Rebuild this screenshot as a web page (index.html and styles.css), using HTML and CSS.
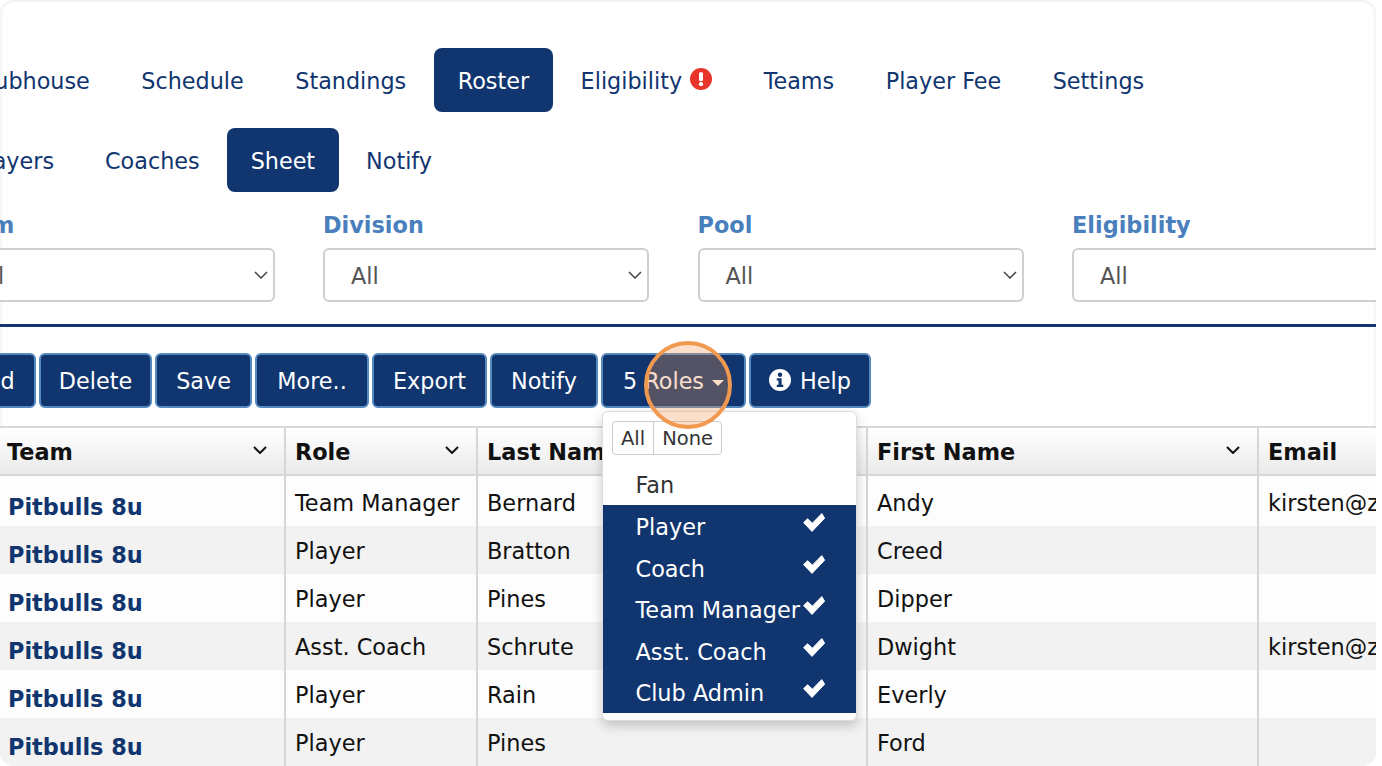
FILE: index.html
```html
<!DOCTYPE html>
<html lang="en">
<head>
<meta charset="utf-8">
<title>Roster</title>
<link rel="stylesheet" href="styles.css">
</head>
<body>
<div class="frame">
  <main class="card">
    <nav class="tabs tabs-main">
      <a class="tab">Clubhouse</a>
      <a class="tab">Schedule</a>
      <a class="tab">Standings</a>
      <a class="tab active">Roster</a>
      <a class="tab">Eligibility
        <svg class="alert" viewBox="0 0 22 22" aria-hidden="true"><circle cx="11" cy="11" r="11" fill="#e8352b"/><rect x="9" y="4.2" width="4" height="9" rx="1.4" fill="#fff"/><circle cx="11" cy="16.2" r="2.1" fill="#fff"/></svg>
      </a>
      <a class="tab">Teams</a>
      <a class="tab">Player Fee</a>
      <a class="tab">Settings</a>
    </nav>
    <nav class="tabs tabs-sub">
      <a class="tab">Players</a>
      <a class="tab">Coaches</a>
      <a class="tab active">Sheet</a>
      <a class="tab">Notify</a>
    </nav>
    <section class="filters">
      <div class="filter"><div class="filter-label">Team</div><div class="select">All<svg class="chev" viewBox="0 0 14 8"><path d="M1 1l6 6 6-6"/></svg></div></div>
      <div class="filter"><div class="filter-label">Division</div><div class="select">All<svg class="chev" viewBox="0 0 14 8"><path d="M1 1l6 6 6-6"/></svg></div></div>
      <div class="filter"><div class="filter-label">Pool</div><div class="select">All<svg class="chev" viewBox="0 0 14 8"><path d="M1 1l6 6 6-6"/></svg></div></div>
      <div class="filter"><div class="filter-label">Eligibility</div><div class="select">All<svg class="chev" viewBox="0 0 14 8"><path d="M1 1l6 6 6-6"/></svg></div></div>
    </section>
    <hr class="rule">
    <div class="toolbar">
      <button class="btn btn-add">Add</button>
      <button class="btn btn-delete">Delete</button>
      <button class="btn btn-save">Save</button>
      <button class="btn btn-more">More..</button>
      <button class="btn btn-export">Export</button>
      <button class="btn btn-notify">Notify</button>
      <button class="btn btn-roles">5 Roles<span class="caret"></span></button>
      <button class="btn btn-help"><svg class="info" viewBox="0 0 22 22" aria-hidden="true"><circle cx="11" cy="11" r="11" fill="#fff"/><circle cx="11" cy="5.8" r="2.2" fill="#10356f"/><path d="M7.8 9.2h4.8v6.6h1.7v2.2H7.8v-2.2h1.7v-4.4H7.8z" fill="#10356f"/></svg>Help</button>
    </div>
    <div class="grid">
      <div class="row head">
        <div class="cell">Team<svg class="sort" viewBox="0 0 14 8"><path d="M1 1l6 6 6-6"/></svg></div>
        <div class="cell">Role<svg class="sort" viewBox="0 0 14 8"><path d="M1 1l6 6 6-6"/></svg></div>
        <div class="cell">Last Name</div>
        <div class="cell">First Name<svg class="sort" viewBox="0 0 14 8"><path d="M1 1l6 6 6-6"/></svg></div>
        <div class="cell">Email</div>
      </div>
      <div class="row first"><div class="cell team">Pitbulls 8u</div><div class="cell">Team Manager</div><div class="cell">Bernard</div><div class="cell">Andy</div><div class="cell">kirsten@zulu.com</div></div>
      <div class="row alt"><div class="cell team">Pitbulls 8u</div><div class="cell">Player</div><div class="cell">Bratton</div><div class="cell">Creed</div><div class="cell"></div></div>
      <div class="row"><div class="cell team">Pitbulls 8u</div><div class="cell">Player</div><div class="cell">Pines</div><div class="cell">Dipper</div><div class="cell"></div></div>
      <div class="row alt"><div class="cell team">Pitbulls 8u</div><div class="cell">Asst. Coach</div><div class="cell">Schrute</div><div class="cell">Dwight</div><div class="cell">kirsten@zulu.com</div></div>
      <div class="row"><div class="cell team">Pitbulls 8u</div><div class="cell">Player</div><div class="cell">Rain</div><div class="cell">Everly</div><div class="cell"></div></div>
      <div class="row alt"><div class="cell team">Pitbulls 8u</div><div class="cell">Player</div><div class="cell">Pines</div><div class="cell">Ford</div><div class="cell"></div></div>
    </div>
    <div class="menu">
      <div class="menu-actions"><span class="mini">All</span><span class="mini">None</span></div>
      <ul class="menu-list">
        <li class="opt">Fan</li>
        <li class="opt on">Player<svg class="check" viewBox="0 0 22 19"><polygon points="0.6,9.6 4.6,5.8 9.4,10.2 18.8,0.6 21.6,5.2 9,18.4"/></svg></li>
        <li class="opt on">Coach<svg class="check" viewBox="0 0 22 19"><polygon points="0.6,9.6 4.6,5.8 9.4,10.2 18.8,0.6 21.6,5.2 9,18.4"/></svg></li>
        <li class="opt on">Team Manager<svg class="check" viewBox="0 0 22 19"><polygon points="0.6,9.6 4.6,5.8 9.4,10.2 18.8,0.6 21.6,5.2 9,18.4"/></svg></li>
        <li class="opt on">Asst. Coach<svg class="check" viewBox="0 0 22 19"><polygon points="0.6,9.6 4.6,5.8 9.4,10.2 18.8,0.6 21.6,5.2 9,18.4"/></svg></li>
        <li class="opt on">Club Admin<svg class="check" viewBox="0 0 22 19"><polygon points="0.6,9.6 4.6,5.8 9.4,10.2 18.8,0.6 21.6,5.2 9,18.4"/></svg></li>
      </ul>
    </div>
    <div class="spotlight"></div>
  </main>
</div>
</body>
</html>
```
FILE: styles.css
```css
* { box-sizing: border-box; }
html, body { margin: 0; height: 100%; background: #fff; overflow: hidden; }
body { font-family: "DejaVu Sans", Verdana, sans-serif; color: #111; }
.frame { width: 1376px; height: 766px; }
.card {
  position: relative;
  width: 1376px;
  height: 766px;
  overflow: hidden;
  background: #fff;
  border-radius: 14px;
  box-shadow: inset 0 2px 3px rgba(0,0,0,.05), inset 2px 0 3px rgba(0,0,0,.03), inset -2px 0 3px rgba(0,0,0,.03);
  padding-top: 48px;
}
.tabs { display: flex; font-size: 22.3px; white-space: nowrap; height: 64px; gap: 3.5px; margin-left: -51.5px; }
.tabs-sub { margin-top: 16px; gap: 3px; margin-left: -51px; }
.tab {
  display: flex;
  align-items: center;
  padding: 1px 24px 0;
  color: #10356f;
  border-radius: 8px;
}
.tab.active { background: #10356f; color: #fff; }
.alert { width: 22px; height: 22px; margin-left: 8px; margin-top: -4px; }
.filters { display: flex; gap: 48.5px; margin: 18px 0 0 -51.5px; }
.filter { flex: 0 0 326px; }
.filter-label { font-size: 22.4px; font-weight: 700; color: #4a7fbd; height: 38px; line-height: 30px; }
.select {
  position: relative;
  height: 54px;
  line-height: 52px;
  padding-left: 26px;
  font-size: 22.4px;
  color: #555;
  background: #fff;
  border: 2px solid #cfcfcf;
  border-radius: 6px;
}
.chev { position: absolute; right: 5px; top: 21px; width: 14px; height: 8px; }
.chev path, .sort path { fill: none; stroke: #444; stroke-width: 1.5; }
.rule { height: 3px; margin: 22px 0 0; border: 0; background: #10356f; }
.toolbar { display: flex; gap: 3px; margin: 26px 0 0 -47px; height: 55px; }
.btn {
  display: flex;
  align-items: center;
  justify-content: center;
  height: 55px;
  padding: 1px 0 0;
  font: 22.3px "DejaVu Sans", Verdana, sans-serif;
  color: #fff;
  background: #10356f;
  border: 2px solid #5689bf;
  border-radius: 6px;
}
.btn-add { width: 83px; padding-right: 3px; }
.btn-delete { width: 113px; }
.btn-save { width: 97px; }
.btn-more { width: 114px; }
.btn-export { width: 115px; }
.btn-notify { width: 108px; }
.btn-roles { width: 145px; }
.btn-help { width: 122px; }
.caret { display: inline-block; margin: 3px 0 0 8px; border: 6px solid transparent; border-top-color: #fff; border-bottom: 0; }
.info { width: 22px; height: 22px; margin-right: 9px; margin-top: -3px; }
.grid { margin-top: 18px; }
.row { display: grid; grid-template-columns: 286px 192px 390px 391px 1fr; height: 48px; background: #fdfdfd; font-size: 22.4px; }
.row.first { height: 50px; }
.row.alt { background: #f2f2f2; }
.cell { position: relative; padding: 1px 0 0 9px; line-height: 48px; white-space: nowrap; overflow: hidden; border-right: 2px solid #d6d6d6; }
.cell:last-child { border-right: 0; }
.row.first .cell { padding-top: 3px; }
.row.head { height: 50px; background: linear-gradient(#fff, #eaeaea); border-top: 2px solid #d8d8d8; border-bottom: 2px solid #d8d8d8; font-weight: 700; }
.row.head .cell { padding-top: 0; line-height: 48px; }
.row.head .cell:first-child { padding-left: 7px; }
.sort { position: absolute; right: 17px; top: 18px; width: 14px; height: 8px; }
.sort path { stroke: #111; stroke-width: 2; }
.row .team { padding: 5px 0 0 8px; font-weight: 700; color: #10356f; }
.row.first .team { padding-top: 7px; }
.menu {
  position: absolute;
  left: 602px;
  top: 411px;
  width: 255px;
  height: 310px;
  padding-top: 9px;
  background: #fff;
  border: 1px solid #ddd;
  border-radius: 6px;
  box-shadow: 0 5px 12px rgba(0,0,0,.2);
}
.menu-actions { display: inline-flex; margin-left: 9px; height: 34px; border: 1px solid #ccc; border-radius: 4px; font-size: 19.5px; color: #333; background: #fff; }
.mini { display: flex; align-items: center; padding: 0 8px; }
.mini + .mini { border-left: 1px solid #ccc; }
.menu-list { list-style: none; margin: 8.4px 0 0; padding: 0; font-size: 22.4px; }
.opt { position: relative; height: 41.6px; line-height: 45.6px; padding-left: 32.5px; color: #333; white-space: nowrap; }
.opt.on { background: #10356f; color: #fff; }
.check { position: absolute; right: 31px; top: 8px; width: 22px; height: 19px; }
.check polygon { fill: #fff; stroke: #fff; stroke-width: 1; stroke-linejoin: round; }
.spotlight {
  position: absolute;
  left: 644px;
  top: 341px;
  width: 88px;
  height: 88px;
  border: 4px solid #f0994f;
  border-radius: 50%;
  background: rgba(243,150,80,.3);
}
```
